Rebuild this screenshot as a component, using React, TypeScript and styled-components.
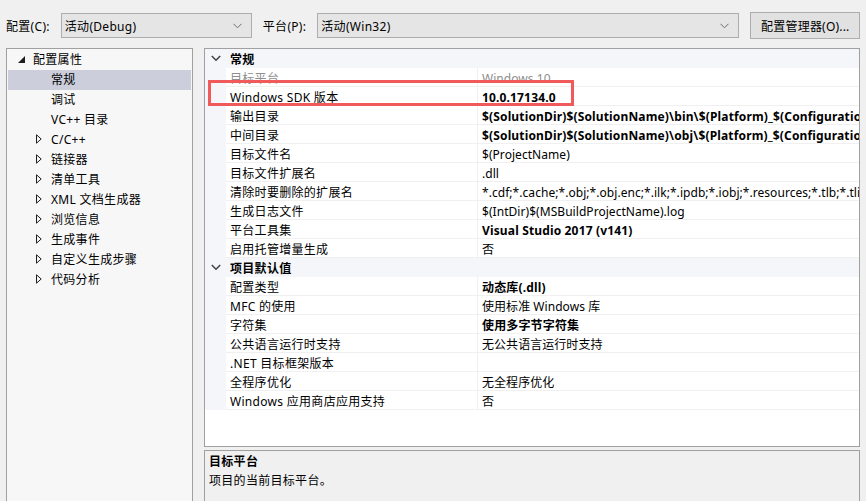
import React from 'react';
import styled, {createGlobalStyle} from "styled-components";

const GlobalStyle = createGlobalStyle`
  html, body {
    margin: 0;
    padding: 0;
    background: #f0f0f0;
  }
  body {
    font-family: "Noto Sans", "Noto Sans CJK SC", sans-serif;
    font-size: 12px;
    letter-spacing: 0.3px;
    color: #000;
    overflow: hidden;
  }
`

type PropRow = {
    name: string
    value: string
    bold?: boolean
    faded?: boolean
}

type Section = {
    title: string
    rows: PropRow[]
}

const sections: Section[] = [
    {
        title: "常规",
        rows: [
            {name: "目标平台", value: "Windows 10", faded: true},
            {name: "Windows SDK 版本", value: "10.0.17134.0", bold: true},
            {name: "输出目录", value: "$(SolutionDir)$(SolutionName)\\bin\\$(Platform)_$(Configuration)\\", bold: true},
            {name: "中间目录", value: "$(SolutionDir)$(SolutionName)\\obj\\$(Platform)_$(Configuration)\\", bold: true},
            {name: "目标文件名", value: "$(ProjectName)"},
            {name: "目标文件扩展名", value: ".dll"},
            {name: "清除时要删除的扩展名", value: "*.cdf;*.cache;*.obj;*.obj.enc;*.ilk;*.ipdb;*.iobj;*.resources;*.tlb;*.tli;*.tlh;*.tmp"},
            {name: "生成日志文件", value: "$(IntDir)$(MSBuildProjectName).log"},
            {name: "平台工具集", value: "Visual Studio 2017 (v141)", bold: true},
            {name: "启用托管增量生成", value: "否"},
        ]
    },
    {
        title: "项目默认值",
        rows: [
            {name: "配置类型", value: "动态库(.dll)", bold: true},
            {name: "MFC 的使用", value: "使用标准 Windows 库"},
            {name: "字符集", value: "使用多字节字符集", bold: true},
            {name: "公共语言运行时支持", value: "无公共语言运行时支持"},
            {name: ".NET 目标框架版本", value: ""},
            {name: "全程序优化", value: "无全程序优化"},
            {name: "Windows 应用商店应用支持", value: "否"},
        ]
    },
]

type TreeItem = {
    label: string
    expandable?: boolean
}

const treeItems: TreeItem[] = [
    {label: "常规"},
    {label: "调试"},
    {label: "VC++ 目录"},
    {label: "C/C++", expandable: true},
    {label: "链接器", expandable: true},
    {label: "清单工具", expandable: true},
    {label: "XML 文档生成器", expandable: true},
    {label: "浏览信息", expandable: true},
    {label: "生成事件", expandable: true},
    {label: "自定义生成步骤", expandable: true},
    {label: "代码分析", expandable: true},
]

const Chevron = () => (
    <svg width="9" height="6" viewBox="0 0 9 6">
        <path d="M0.5 0.8 L4.5 4.8 L8.5 0.8" fill="none" stroke="#6d6d6d" strokeWidth="1"/>
    </svg>
)

const SectionChevron = () => (
    <svg width="10" height="7" viewBox="0 0 10 7">
        <path d="M0.8 1 L5 5.2 L9.2 1" fill="none" stroke="#444" strokeWidth="1.6"/>
    </svg>
)

const ExpandedArrow = () => (
    <svg width="7" height="7" viewBox="0 0 7 7">
        <path d="M7 0 L7 7 L0 7 Z" fill="#1e1e1e"/>
    </svg>
)

const CollapsedArrow = () => (
    <svg width="6" height="10" viewBox="0 0 6 10">
        <path d="M0.5 0.8 L5.2 5 L0.5 9.2 Z" fill="none" stroke="#1e1e1e" strokeWidth="1"/>
    </svg>
)

export default function App() {
    return (
        <Page>
            <GlobalStyle/>
            <Toolbar>
                <ToolLabel>配置(C):</ToolLabel>
                <Combo width={191}>
                    <span>活动(Debug)</span>
                    <Chevron/>
                </Combo>
                <ToolLabel>平台(P):</ToolLabel>
                <Combo width={422}>
                    <span>活动(Win32)</span>
                    <Chevron/>
                </Combo>
                <ManagerButton>配置管理器(O)...</ManagerButton>
            </Toolbar>
            <Main>
                <TreePanel>
                    <TreeRow>
                        <ArrowBox><ExpandedArrow/></ArrowBox>
                        <span>配置属性</span>
                    </TreeRow>
                    {treeItems.map((item, i) => (
                        <TreeRow key={item.label} $depth={1} $selected={i === 0}>
                            <ArrowBox>{item.expandable && <CollapsedArrow/>}</ArrowBox>
                            <span>{item.label}</span>
                        </TreeRow>
                    ))}
                </TreePanel>
                <RightColumn>
                    <GridPanel>
                        {sections.map(section => (
                            <React.Fragment key={section.title}>
                                <SectionRow>
                                    <Gutter><SectionChevron/></Gutter>
                                    <SectionTitle>{section.title}</SectionTitle>
                                </SectionRow>
                                {section.rows.map(row => (
                                    <Row key={row.name} $faded={row.faded}>
                                        <Gutter/>
                                        <NameCell>{row.name}</NameCell>
                                        <ValueCell $bold={row.bold}>{row.value}</ValueCell>
                                    </Row>
                                ))}
                            </React.Fragment>
                        ))}
                        <Highlight/>
                    </GridPanel>
                    <DescPanel>
                        <DescTitle>目标平台</DescTitle>
                        <DescText>项目的当前目标平台。</DescText>
                    </DescPanel>
                </RightColumn>
            </Main>
        </Page>
    );
}

const Page = styled.div`
  width: 866px;
  height: 501px;
  display: flex;
  flex-direction: column;
  overflow: hidden;
`

const Toolbar = styled.div`
  display: flex;
  align-items: center;
  height: 27px;
  padding: 12px 0 0 6px;
  gap: 11px;
`

const ToolLabel = styled.span`
  white-space: nowrap;
`

const Combo = styled.div<{ width: number }>`
  box-sizing: border-box;
  width: ${p => p.width}px;
  height: 25px;
  border: 1px solid #adadad;
  background: #e5e5e5;
  display: flex;
  align-items: center;
  justify-content: space-between;
  padding: 0 9px 0 3px;
`

const ManagerButton = styled.div`
  box-sizing: border-box;
  width: 110px;
  height: 27px;
  border: 1px solid #adadad;
  background: #e1e1e1;
  display: flex;
  align-items: center;
  justify-content: center;
  white-space: nowrap;
  letter-spacing: 0.2px;
`

const Main = styled.div`
  flex: 1;
  display: flex;
  padding: 9px 0 0 6px;
  gap: 11px;
  min-height: 0;
`

const TreePanel = styled.div`
  box-sizing: border-box;
  width: 187px;
  height: 470px;
  border: 1px solid #a0a0a0;
  background: #f7f7f7;
  padding: 1px 1px;
`

const TreeRow = styled.div<{ $depth?: number, $selected?: boolean }>`
  box-sizing: border-box;
  height: 20px;
  padding-bottom: 2px;
  display: flex;
  align-items: center;
  padding-left: ${p => p.$depth ? 26 : 8}px;
  background: ${p => p.$selected ? "#cccedb" : "transparent"};
  white-space: nowrap;
`

const ArrowBox = styled.span`
  width: 17px;
  display: inline-flex;
  align-items: center;
  justify-content: flex-start;
  padding-left: 2px;
  box-sizing: border-box;
`

const RightColumn = styled.div`
  width: 656px;
  display: flex;
  flex-direction: column;
  gap: 3px;
`

const GridPanel = styled.div`
  position: relative;
  box-sizing: border-box;
  height: 399px;
  border: 1px solid #a0a0a0;
  background: #fff;
  overflow: hidden;
`

const SectionRow = styled.div`
  height: 19px;
  display: flex;
  align-items: center;
  background: #f4f6fa;
`

const Gutter = styled.div`
  width: 20px;
  flex: none;
  align-self: stretch;
  display: flex;
  align-items: center;
  justify-content: center;
  background: #f4f6fa;
  padding-left: 1px;
`

const SectionTitle = styled.div`
  padding-left: 4px;
  font-weight: bold;
`

const Row = styled.div<{ $faded?: boolean }>`
  height: 19px;
  display: flex;
  color: ${p => p.$faded ? "#8e8e8e" : "#000"};
`

const NameCell = styled.div`
  width: 252px;
  flex: none;
  box-sizing: border-box;
  padding: 3px 0 0 4px;
  line-height: 15px;
  border-bottom: 1px solid #f0f0f0;
  border-right: 1px solid #f0f0f0;
  white-space: nowrap;
`

const ValueCell = styled.div<{ $bold?: boolean }>`
  flex: 1;
  min-width: 0;
  box-sizing: border-box;
  padding: 3px 0 0 4px;
  line-height: 15px;
  border-bottom: 1px solid #f0f0f0;
  font-weight: ${p => p.$bold ? "bold" : "normal"};
  letter-spacing: ${p => p.$bold ? "0.15px" : "0.05px"};
  white-space: nowrap;
`

const Highlight = styled.div`
  position: absolute;
  left: 3px;
  top: 31px;
  width: 366px;
  height: 26px;
  box-sizing: border-box;
  border: 3px solid #f05a5a;
`

const DescPanel = styled.div`
  box-sizing: border-box;
  flex: 1;
  border: 1px solid #a0a0a0;
  border-bottom: none;
  background: #f0f0f0;
  padding: 1px 4px;
`

const DescTitle = styled.div`
  font-weight: bold;
  line-height: 19px;
`

const DescText = styled.div`
  line-height: 19px;
`
